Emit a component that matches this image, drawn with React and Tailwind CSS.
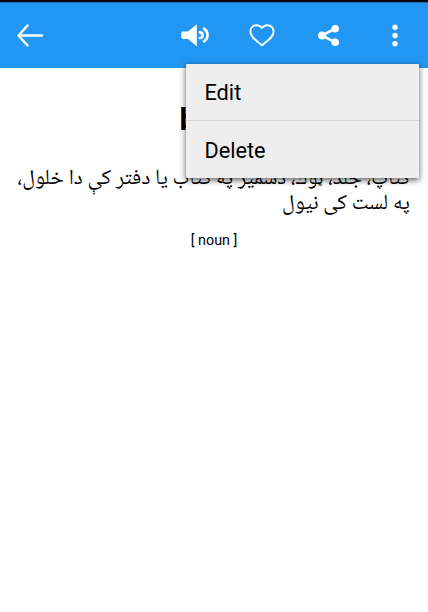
const menuItems = ["Edit", "Delete"];

function IconButton({ label, className, children }) {
  return (
    <button
      type="button"
      aria-label={label}
      className={`flex h-[57px] items-center justify-center text-white ${className}`}
    >
      {children}
    </button>
  );
}

function BackIcon() {
  return (
    <svg width="30" height="30" viewBox="0 0 30 30" fill="none" stroke="currentColor" strokeWidth="2.5">
      <path d="M27 14.5H4M12.5 4.5L3.5 14.5L12.5 24.5" strokeLinecap="round" strokeLinejoin="round" />
    </svg>
  );
}

function SpeakerIcon() {
  return (
    <svg width="30" height="26" viewBox="0 0 30 26" fill="none">
      <path d="M2.7 8.5Q1.3 8.5 1.3 9.9V14.6Q1.3 16 2.7 16H8L16.8 23.3V1.2L8 8.5Z" fill="currentColor" />
      <path d="M19.8 9.4A2.8 2.8 0 0 1 19.8 15" stroke="currentColor" strokeWidth="2.6" strokeLinecap="round" />
      <path d="M24 5.6Q27.6 8 27.6 12.1T24 18.4" stroke="currentColor" strokeWidth="2.6" strokeLinecap="round" />
    </svg>
  );
}

function HeartIcon() {
  return (
    <svg width="28" height="26" viewBox="0 0 28 26" fill="none" stroke="currentColor" strokeWidth="2">
      <path
        d="M14 5C12.4 2.9 10.4 2.3 8.4 2.3C4.8 2.3 2.4 5.2 2.4 8.7C2.4 14.2 8.7 17.8 14 22.3C19.3 17.8 25.6 14.2 25.6 8.7C25.6 5.2 23.2 2.3 19.6 2.3C17.6 2.3 15.6 2.9 14 5Z"
        strokeLinejoin="round"
      />
    </svg>
  );
}

function ShareIcon() {
  return (
    <svg width="24" height="24" viewBox="0 0 24 24" fill="currentColor">
      <path d="M18.2 4.7L5 11.5L18.2 18.3" fill="none" stroke="currentColor" strokeWidth="2.6" />
      <circle cx="5" cy="11.5" r="3.9" />
      <circle cx="18.2" cy="4.7" r="3.8" />
      <circle cx="18.2" cy="18.3" r="3.8" />
    </svg>
  );
}

function MoreIcon() {
  return (
    <svg width="8" height="24" viewBox="0 0 8 24" fill="currentColor">
      <circle cx="4" cy="3.3" r="2.7" />
      <circle cx="4" cy="11.5" r="2.7" />
      <circle cx="4" cy="19.7" r="2.7" />
    </svg>
  );
}

export default function App() {
  return (
    <div className="relative h-[612px] w-[428px] overflow-hidden bg-white font-['Roboto',sans-serif] text-black">
      <div className="h-[2px] bg-black" />
      <header className="flex h-[66px] items-center border-t border-[#1b6fb5] bg-[#2196f3]">
        <IconButton label="Back" className="w-[59px]">
          <BackIcon />
        </IconButton>
        <div className="ml-auto flex">
          <IconButton label="Listen" className="w-[67px]">
            <SpeakerIcon />
          </IconButton>
          <IconButton label="Favourite" className="w-[67px]">
            <HeartIcon />
          </IconButton>
          <IconButton label="Share" className="w-[67px]">
            <ShareIcon />
          </IconButton>
          <IconButton label="More options" className="w-[66px]">
            <MoreIcon />
          </IconButton>
        </div>
      </header>

      <main className="flex flex-col px-[18px] pt-[34px]">
        <h1 className="text-center text-[31px] leading-[36px] font-bold">book</h1>
        <p
          dir="rtl"
          lang="ps"
          className="mt-[28px] font-['Noto_Naskh_Arabic_UI','Noto_Naskh_Arabic','DejaVu_Sans',sans-serif] text-[21.5px] leading-[25px] whitespace-nowrap"
        >
          کتاپ، جلد، ټوك، دسمیز په کتاب یا دفتر کې دا خلول،
          <br />
          په لست کی نیول
        </p>
        <p className="mt-[14px] text-center text-[14.3px] leading-[20px]">[ noun ]</p>
      </main>

      <div
        role="menu"
        className="absolute top-[64px] left-[186px] w-[232.5px] divide-y divide-[#d6d6d6] rounded-[1px] bg-[#eeeeee] shadow-[0_2px_6px_rgba(0,0,0,0.65)]"
      >
        {menuItems.map((item) => (
          <div key={item} role="menuitem" className="flex h-[57px] items-center px-[18.5px] pt-[3px] text-[21.7px]">
            {item}
          </div>
        ))}
      </div>
    </div>
  );
}
